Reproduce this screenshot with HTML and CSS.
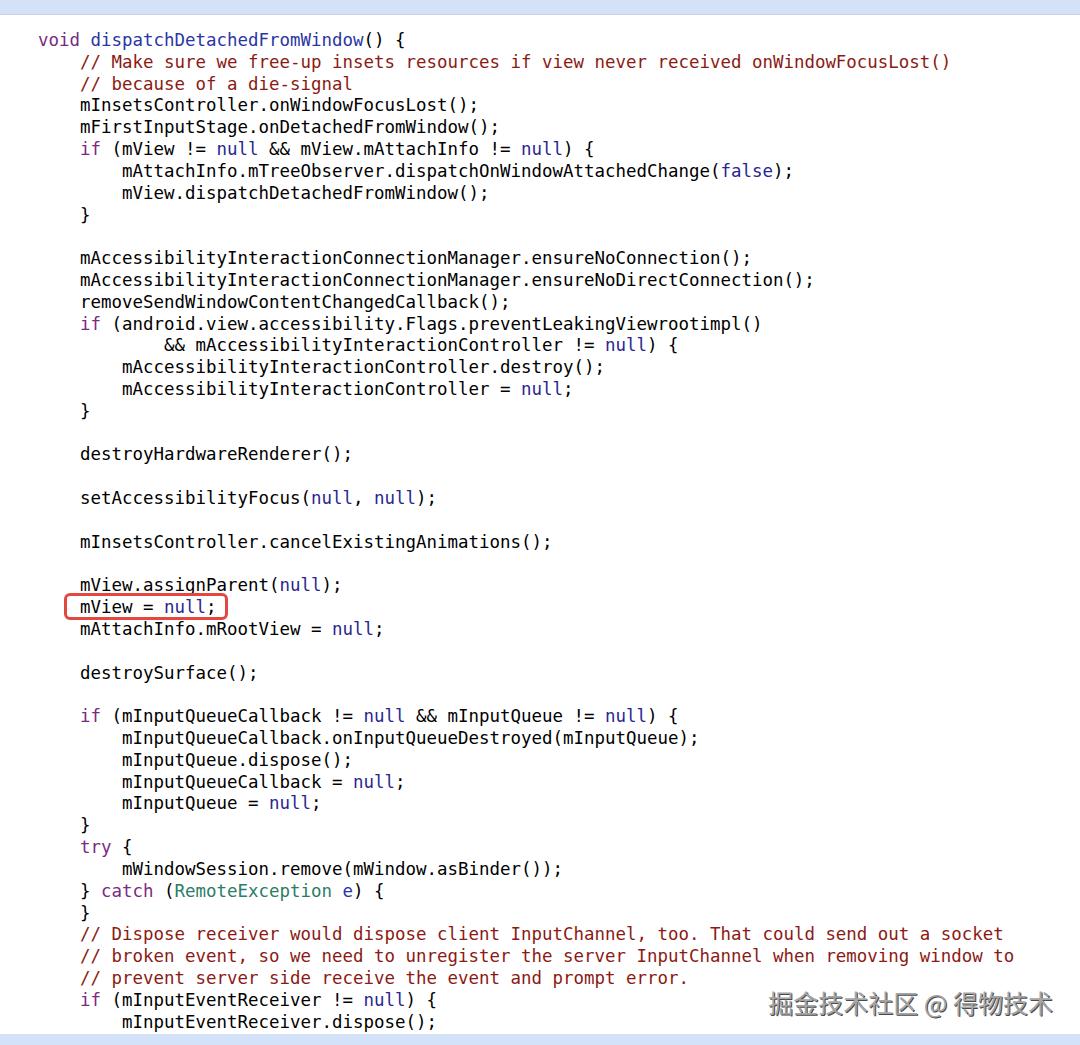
FILE: index.html
```html
<!DOCTYPE html>
<html>
<head>
<meta charset="utf-8">
<link rel="stylesheet" href="styles.css">
</head>
<body>
<div class="page">
  <div class="topbar"></div>
  <main class="main">
<pre class="code"><span class="kw">void</span> <span class="fn">dispatchDetachedFromWindow</span>() {
    <span class="cm">// Make sure we free-up insets resources if view never received onWindowFocusLost()</span>
    <span class="cm">// because of a die-signal</span>
    mInsetsController.onWindowFocusLost();
    mFirstInputStage.onDetachedFromWindow();
    <span class="kw">if</span> (mView != <span class="lit">null</span> &amp;&amp; mView.mAttachInfo != <span class="lit">null</span>) {
        mAttachInfo.mTreeObserver.dispatchOnWindowAttachedChange(<span class="lit">false</span>);
        mView.dispatchDetachedFromWindow();
    }

    mAccessibilityInteractionConnectionManager.ensureNoConnection();
    mAccessibilityInteractionConnectionManager.ensureNoDirectConnection();
    removeSendWindowContentChangedCallback();
    <span class="kw">if</span> (android.view.accessibility.Flags.preventLeakingViewrootimpl()
            &amp;&amp; mAccessibilityInteractionController != <span class="lit">null</span>) {
        mAccessibilityInteractionController.destroy();
        mAccessibilityInteractionController = <span class="lit">null</span>;
    }

    destroyHardwareRenderer();

    setAccessibilityFocus(<span class="lit">null</span>, <span class="lit">null</span>);

    mInsetsController.cancelExistingAnimations();

    mView.assignParent(<span class="lit">null</span>);
    <span class="mark">mView = <span class="lit">null</span>;</span>
    mAttachInfo.mRootView = <span class="lit">null</span>;

    destroySurface();

    <span class="kw">if</span> (mInputQueueCallback != <span class="lit">null</span> &amp;&amp; mInputQueue != <span class="lit">null</span>) {
        mInputQueueCallback.onInputQueueDestroyed(mInputQueue);
        mInputQueue.dispose();
        mInputQueueCallback = <span class="lit">null</span>;
        mInputQueue = <span class="lit">null</span>;
    }
    <span class="kw">try</span> {
        mWindowSession.remove(mWindow.asBinder());
    } <span class="kw">catch</span> (<span class="ty">RemoteException</span> <span class="fn">e</span>) {
    }
    <span class="cm">// Dispose receiver would dispose client InputChannel, too. That could send out a socket</span>
    <span class="cm">// broken event, so we need to unregister the server InputChannel when removing window to</span>
    <span class="cm">// prevent server side receive the event and prompt error.</span>
    <span class="kw">if</span> (mInputEventReceiver != <span class="lit">null</span>) {
        mInputEventReceiver.dispose();</pre>
    <div class="watermark">掘金技术社区 @ 得物技术</div>
  </main>
  <div class="bottombar"></div>
</div>
</body>
</html>
```
FILE: styles.css
```css
html, body {
  margin: 0;
  padding: 0;
  background: #ffffff;
}
.page {
  width: 1080px;
  height: 1045px;
  display: flex;
  flex-direction: column;
  overflow: hidden;
}
.topbar {
  height: 15px;
  flex: 0 0 15px;
  background: #d3e2f9;
  border-bottom: 1px solid #c9d3e2;
  box-sizing: border-box;
}
.main {
  flex: 1;
  position: relative;
  overflow: hidden;
}
.code {
  margin: 0;
  padding: 15px 0 0 38px;
  font-family: "DejaVu Sans Mono", monospace;
  font-size: 17.45px;
  line-height: 21.82px;
  color: #000000;
  white-space: pre;
}
.kw { color: #7a2a84; }
.fn { color: #2a36a4; }
.lit { color: #2a2590; }
.cm { color: #8b1a14; }
.ty { color: #2c7c67; }
.mark {
  position: relative;
}
.mark::before {
  content: "";
  position: absolute;
  left: -16px;
  right: -11px;
  top: -4px;
  bottom: -3px;
  border: 3.5px solid #e2483f;
  border-radius: 6px;
}
.watermark {
  position: absolute;
  right: 27px;
  bottom: 17px;
  font-family: "Noto Sans CJK SC", sans-serif;
  font-size: 25px;
  line-height: 30px;
  color: #a5a5a5;
  text-shadow: 1px 1px 0 #4a4a4a, -1px -1px 0 #ffffff;
}
.bottombar {
  height: 11px;
  flex: 0 0 11px;
  background: #d3e2f9;
}
```
